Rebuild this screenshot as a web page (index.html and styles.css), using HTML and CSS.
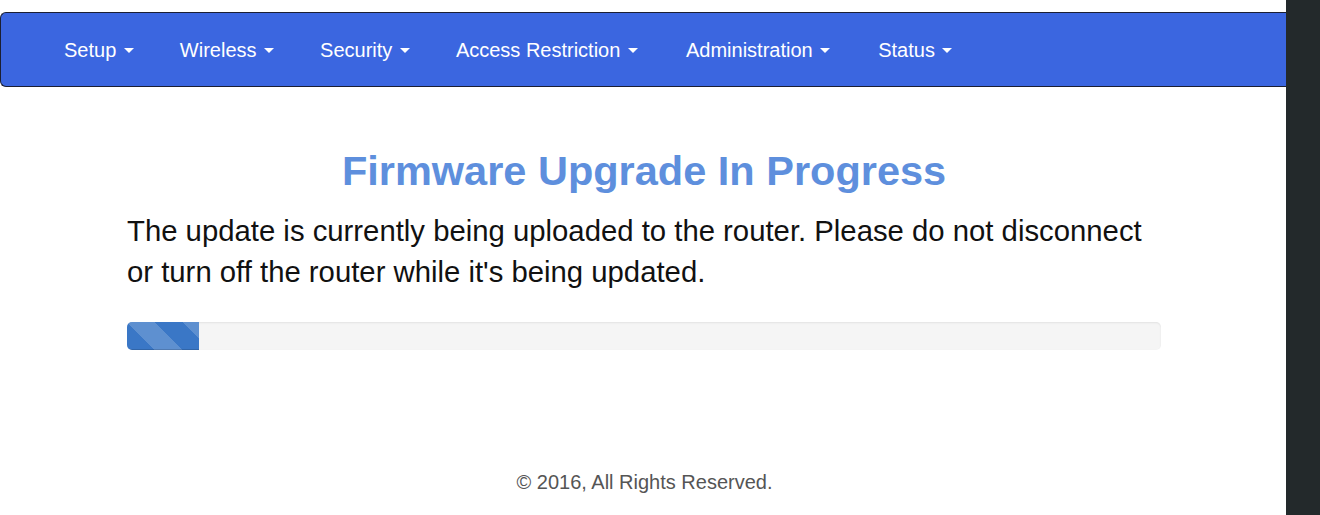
FILE: index.html
```html
<!DOCTYPE html>
<html lang="en">
<head>
<meta charset="utf-8">
<title>Firmware Upgrade In Progress</title>
<link rel="stylesheet" href="styles.css">
</head>
<body>
<div class="screen">
  <div class="page">
    <nav class="navbar">
      <ul class="nav">
        <li class="nav-item">Setup <span class="caret"></span></li>
        <li class="nav-item">Wireless <span class="caret"></span></li>
        <li class="nav-item">Security <span class="caret"></span></li>
        <li class="nav-item">Access Restriction <span class="caret"></span></li>
        <li class="nav-item">Administration <span class="caret"></span></li>
        <li class="nav-item">Status <span class="caret"></span></li>
      </ul>
    </nav>
    <main class="content">
      <h1 class="title">Firmware Upgrade In Progress</h1>
      <p class="message">The update is currently being uploaded to the router. Please do not disconnect or turn off the router while it's being updated.</p>
      <div class="progress">
        <div class="progress-bar" style="width: 72px"></div>
      </div>
    </main>
    <footer class="footer">© 2016, All Rights Reserved.</footer>
  </div>
  <aside class="side"></aside>
</div>
</body>
</html>
```
FILE: styles.css
```css
html, body {
  margin: 0;
  padding: 0;
  background: #ffffff;
  font-family: "Liberation Sans", Arial, Helvetica, sans-serif;
}

.screen {
  display: flex;
  width: 1320px;
  height: 515px;
  overflow: hidden;
}

.page {
  flex: 1;
  display: flex;
  flex-direction: column;
  padding-top: 12px;
  background: #ffffff;
}

.side {
  width: 34px;
  background: #23292b;
}

.navbar {
  height: 73px;
  background: #3b66e0;
  border-top: 1px solid #1b1f33;
  border-bottom: 1px solid #1b1f33;
  border-left: 1px solid #1b1f33;
  border-radius: 6px 0 0 6px;
  display: flex;
  align-items: center;
}

.nav {
  list-style: none;
  margin: 0;
  padding: 0 0 0 63px;
  display: flex;
  gap: 44px;
}

.nav-item {
  color: #ffffff;
  font-size: 20px;
  line-height: 28px;
  display: flex;
  align-items: center;
  white-space: pre;
}

.nav-item:nth-child(5),
.nav-item:nth-child(6) {
  margin-left: 2px;
}

.caret {
  display: inline-block;
  width: 0;
  height: 0;
  margin-left: 2px;
  margin-right: 2px;
  border-top: 5px solid #ffffff;
  border-left: 5px solid transparent;
  border-right: 5px solid transparent;
  margin-top: 2px;
}

.content {
  width: 1034px;
  margin: 0 125px 0 127px;
}

.title {
  margin: 61px 0 0;
  text-align: center;
  font-size: 41.5px;
  line-height: 46px;
  font-weight: bold;
  color: #5e8fdd;
}

.message {
  margin: 16px 0 0;
  font-size: 29.3px;
  line-height: 41px;
  color: #111111;
}

.progress {
  margin-top: 30px;
  height: 28px;
  background: #f5f5f5;
  border-radius: 5px;
  box-shadow: inset 0 1px 2px rgba(0, 0, 0, 0.08);
  overflow: hidden;
}

.progress-bar {
  height: 100%;
  background-color: #3a77c6;
  background-image: linear-gradient(45deg,
    rgba(255, 255, 255, 0.18) 25%, transparent 25%,
    transparent 50%, rgba(255, 255, 255, 0.18) 50%,
    rgba(255, 255, 255, 0.18) 75%, transparent 75%, transparent);
  background-size: 56px 56px;
  box-shadow: inset 0 -1px 0 rgba(0, 0, 0, 0.15);
}

.footer {
  margin: 118px 0 0 3px;
  text-align: center;
  font-size: 20px;
  line-height: 28px;
  color: #555555;
}
```
